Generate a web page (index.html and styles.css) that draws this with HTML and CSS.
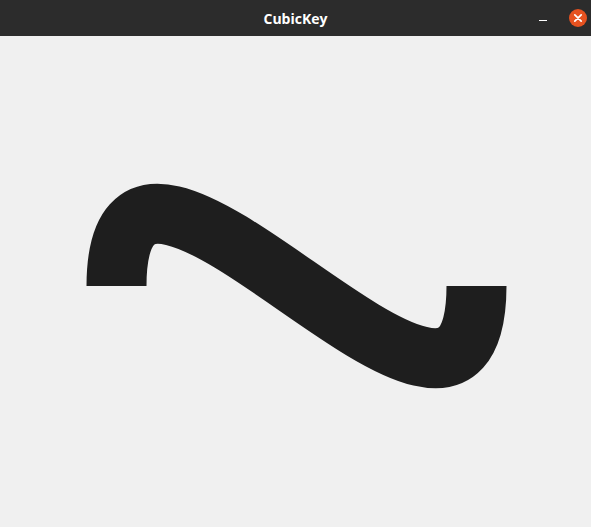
FILE: index.html
```html
<!DOCTYPE html>
<html>
<head>
<meta charset="utf-8">
<link rel="stylesheet" href="styles.css">
</head>
<body>
<div class="window">
  <header class="titlebar">
    <span class="title">CubicKey</span>
    <div class="controls">
      <span class="minimize"></span>
      <span class="close">
        <svg width="18" height="18" viewBox="0 0 18 18"><path d="M5.8 5.8 L12.2 12.2 M12.2 5.8 L5.8 12.2" stroke="#fff" stroke-width="1.7" stroke-linecap="round"/></svg>
      </span>
    </div>
  </header>
  <main class="canvas">
    <svg class="curve" width="591" height="491" viewBox="0 0 591 491">
      <path d="M116.5 250 C116.5 0 476.5 500 476.5 250" fill="none" stroke="#1e1e1e" stroke-width="60" stroke-linecap="butt"/>
    </svg>
  </main>
</div>
</body>
</html>
```
FILE: styles.css
```css
html, body {
  margin: 0;
  padding: 0;
  width: 591px;
  height: 527px;
  overflow: hidden;
  background: #f0f0f0;
}
.window {
  display: flex;
  flex-direction: column;
  width: 591px;
  height: 527px;
}
.titlebar {
  position: relative;
  height: 36px;
  flex: none;
  background: #2c2c2c;
  display: flex;
  align-items: center;
  justify-content: center;
}
.title {
  color: #ffffff;
  font-family: "Open Sans", "DejaVu Sans", sans-serif;
  font-weight: 700;
  font-size: 14px;
}
.controls {
  position: absolute;
  right: 4px;
  top: 0;
  height: 36px;
  display: flex;
  align-items: center;
  gap: 22px;
}
.minimize {
  width: 8px;
  height: 1px;
  background: #ffffff;
  margin-top: 4px;
}
.close {
  width: 18px;
  height: 18px;
  border-radius: 50%;
  background: #e65220;
  display: flex;
}
.canvas {
  flex: 1;
  background: #f0f0f0;
}
.curve {
  display: block;
}
```
